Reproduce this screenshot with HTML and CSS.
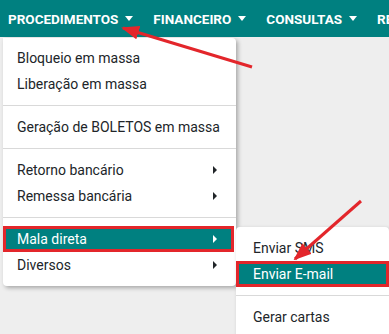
FILE: index.html
```html
<!DOCTYPE html>
<html lang="pt-BR">
<head>
    <meta charset="UTF-8">
    <meta name="viewport" content="width=device-width, initial-scale=1.0">
    <title>Menu</title>
    <link rel="stylesheet" href="styles.css">
</head>
<body>
    <nav class="navbar">
        <a class="nav-link">PROCEDIMENTOS <span class="caret"></span></a>
        <a class="nav-link">FINANCEIRO <span class="caret"></span></a>
        <a class="nav-link">CONSULTAS <span class="caret"></span></a>
        <a class="nav-link">RELATÓRIOS <span class="caret"></span></a>
    </nav>

    <ul class="dropdown-menu main-menu">
        <li class="dropdown-item">Bloqueio em massa</li>
        <li class="dropdown-item">Liberação em massa</li>
        <li class="dropdown-divider"></li>
        <li class="dropdown-item">Geração de BOLETOS em massa</li>
        <li class="dropdown-divider"></li>
        <li class="dropdown-item has-sub">Retorno bancário <span class="caret-right"></span></li>
        <li class="dropdown-item has-sub">Remessa bancária <span class="caret-right"></span></li>
        <li class="dropdown-divider"></li>
        <li class="dropdown-item has-sub active">Mala direta <span class="caret-right"></span>
            <ul class="dropdown-menu sub-menu">
                <li class="dropdown-item">Enviar SMS</li>
                <li class="dropdown-item active">Enviar E-mail</li>
                <li class="dropdown-divider"></li>
                <li class="dropdown-item">Gerar cartas</li>
            </ul>
        </li>
        <li class="dropdown-item has-sub">Diversos <span class="caret-right"></span></li>
    </ul>

    <!-- setas de destaque -->
    <svg class="annotations" width="389" height="334" viewBox="0 0 389 334">
        <defs>
            <marker id="head" markerUnits="userSpaceOnUse" markerWidth="18" markerHeight="14" refX="16" refY="7" orient="auto">
                <path d="M0,0 L18,7 L0,14 z" fill="#e3262b"/>
            </marker>
        </defs>
        <line x1="252" y1="67" x2="123" y2="28" stroke="#e3262b" stroke-width="3" marker-end="url(#head)"/>
        <line x1="361" y1="201" x2="295" y2="259" stroke="#e3262b" stroke-width="3" marker-end="url(#head)"/>
    </svg>
</body>
</html>
```

FILE: styles.css
```css
body {
    margin: 0;
    width: 389px;
    height: 334px;
    overflow: hidden;
    position: relative;
    background-color: #eeeeee;
    font-family: Roboto, "Liberation Sans", Arial, sans-serif;
}
.navbar {
    display: flex;
    align-items: center;
    height: 37px;
    background-color: #008080;
    white-space: nowrap;
    overflow: hidden;
}
.nav-link {
    display: flex;
    align-items: center;
    padding: 0 12px 0 8px;
    color: #ffffff;
    font-size: 13.5px;
    font-weight: 700;
}
.caret {
    margin-left: 7px;
    border-top: 5px solid #ffffff;
    border-left: 4px solid transparent;
    border-right: 4px solid transparent;
}
.dropdown-menu {
    list-style: none;
    margin: 0;
    padding: 7px 0 8px;
    background-color: #ffffff;
    border-radius: 4px;
    box-shadow: 2px 2px 4px rgba(0, 0, 0, 0.3);
    font-size: 14px;
    color: #212529;
}
.main-menu {
    position: absolute;
    top: 38px;
    left: 3px;
    width: 233px;
    border-top-left-radius: 0;
}
.dropdown-item {
    display: flex;
    align-items: center;
    justify-content: space-between;
    height: 26px;
    padding: 0 19px 0 14px;
    position: relative;
    white-space: nowrap;
}
.dropdown-item.active {
    background-color: #008080;
    color: #ffffff;
    outline: 3px solid #e3262b;
    outline-offset: -3px;
    margin-right: 2px;
    padding-right: 17px;
}
.dropdown-divider {
    margin: 8px 0;
    border-top: 1px solid #d9d9d9;
}
.caret-right {
    border-left: 4px solid #212529;
    border-top: 4px solid transparent;
    border-bottom: 4px solid transparent;
}
.dropdown-item.active .caret-right {
    border-left-color: #ffffff;
}
.sub-menu {
    position: absolute;
    top: 1px;
    left: 233px;
    width: 153px;
    padding-top: 8px;
    color: #212529;
}
.sub-menu .dropdown-item {
    padding-left: 17px;
}
.sub-menu .dropdown-item.active {
    margin-right: 0;
    color: #ffffff;
}
.annotations {
    position: absolute;
    top: 0;
    left: 0;
    pointer-events: none;
}
```
